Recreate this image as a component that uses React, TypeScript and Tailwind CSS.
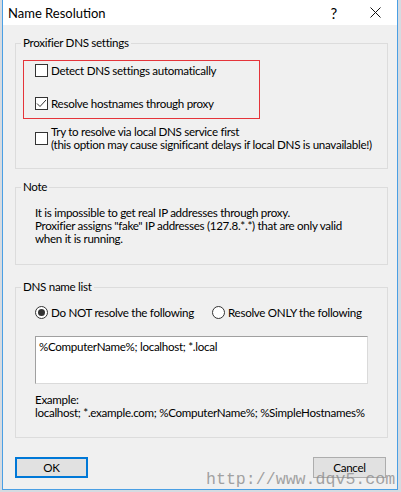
import React from 'react';

function CheckBox({ checked }: { checked?: boolean }) {
  return (
    <span className="w-[13px] h-[13px] shrink-0 border border-[#333333] bg-white flex items-center justify-center">
      {checked && (
        <svg width="11" height="11" viewBox="0 0 11 11">
          <polyline points="1,5.5 4,8.5 10,2" fill="none" stroke="#333333" strokeWidth="1" />
        </svg>
      )}
    </span>
  );
}

function Radio({ checked }: { checked?: boolean }) {
  return (
    <span className="w-[13px] h-[13px] shrink-0 rounded-full border border-[#333333] bg-white flex items-center justify-center">
      {checked && <span className="w-[7px] h-[7px] rounded-full bg-[#333333]" />}
    </span>
  );
}

function Group({ title, className, children }: { title: string; className: string; children: React.ReactNode }) {
  return (
    <div className={`relative ml-[12px] w-[373px] border border-[#dcdcdc] ${className}`}>
      <span className="absolute left-[5px] -top-[9px] px-[2px] bg-[#f0f0f0] leading-[16px]">{title}</span>
      {children}
    </div>
  );
}

export default function App() {
  return (
    <div className="relative w-[401px] h-[492px] overflow-hidden bg-[#d6dbe1] text-[11.6px] tracking-[-0.3px] text-black whitespace-nowrap font-['Segoe_UI','Lato',sans-serif]">
      <div className="ml-[2px] w-[396px] h-[490px] flex flex-col border border-t-0 border-[#4a9fe4] bg-[#f0f0f0]">
        {/* title bar */}
        <div className="h-[25px] bg-white flex items-center shrink-0">
          <span className="ml-[5px] text-[13px] tracking-normal leading-[16px]">Name Resolution</span>
          <span className="ml-auto mr-[33px] text-[15px] leading-[16px]">?</span>
          <svg className="mr-[16px]" width="11" height="11" viewBox="0 0 11 11">
            <path d="M0.5 0.5 L10.5 10.5 M10.5 0.5 L0.5 10.5" stroke="#111111" strokeWidth="1" />
          </svg>
        </div>

        <Group title="Proxifier DNS settings" className="mt-[18px] h-[126px]">
          <div className="mt-[16px] ml-[7px] w-[237px] h-[59px] border border-[#e5343a] pt-[3px] pl-[11px]">
            <div className="flex items-center gap-[3px] leading-[13px]">
              <CheckBox />
              <span>Detect DNS settings automatically</span>
            </div>
            <div className="mt-[20px] flex items-center gap-[3px] leading-[13px]">
              <CheckBox checked />
              <span>Resolve hostnames through proxy</span>
            </div>
          </div>
          <div className="mt-[6px] ml-[19px] flex items-center gap-[3px] leading-[13px]">
            <CheckBox />
            <span>
              Try to resolve via local DNS service first
              <br />
              (this option may cause significant delays if local DNS is unavailable!)
            </span>
          </div>
        </Group>

        <Group title="Note" className="mt-[18px] h-[78px]">
          <p className="pt-[18px] pl-[19px] leading-[13px]">
            It is impossible to get real IP addresses through proxy.
            <br />
            Proxifier assigns "fake" IP addresses (127.8.*.*) that are only valid
            <br />
            when it is running.
          </p>
        </Group>

        <Group title="DNS name list" className="mt-[22px] h-[151px]">
          <div className="pt-[18px] pl-[19px] flex items-center leading-[13px]">
            <div className="w-[177px] flex items-center gap-[3px]">
              <Radio checked />
              <span>Do NOT resolve the following</span>
            </div>
            <div className="flex items-center gap-[3px]">
              <Radio />
              <span>Resolve ONLY the following</span>
            </div>
          </div>
          <div className="mt-[17px] ml-[19px] w-[333px] h-[48px] bg-white border border-t-[#a0a0a0] border-l-[#a0a0a0] border-b-[#dadada] border-r-[#dadada] pt-[3px] pl-[3px] leading-[13px]">
            %ComputerName%; localhost; *.local
          </div>
          <p className="mt-[9px] ml-[19px] leading-[13px]">
            Example:
            <br />
            localhost; *.example.com; %ComputerName%; %SimpleHostnames%
          </p>
        </Group>

        <div className="mt-[19px] ml-[12px] w-[371px] flex justify-between">
          <button className="w-[73px] h-[21px] border-2 border-[#0078d7] bg-[#e1e1e1] leading-[13px]">OK</button>
          <button className="w-[73px] h-[21px] border border-[#adadad] bg-[#e1e1e1] leading-[13px]">Cancel</button>
        </div>
      </div>

      <span className="absolute left-[206px] top-[470px] text-[16.6px] tracking-normal leading-[20px] text-[#8c8c8c]/80 font-['Liberation_Mono',monospace]">
        http://www.dqv5.com
      </span>
    </div>
  );
}
